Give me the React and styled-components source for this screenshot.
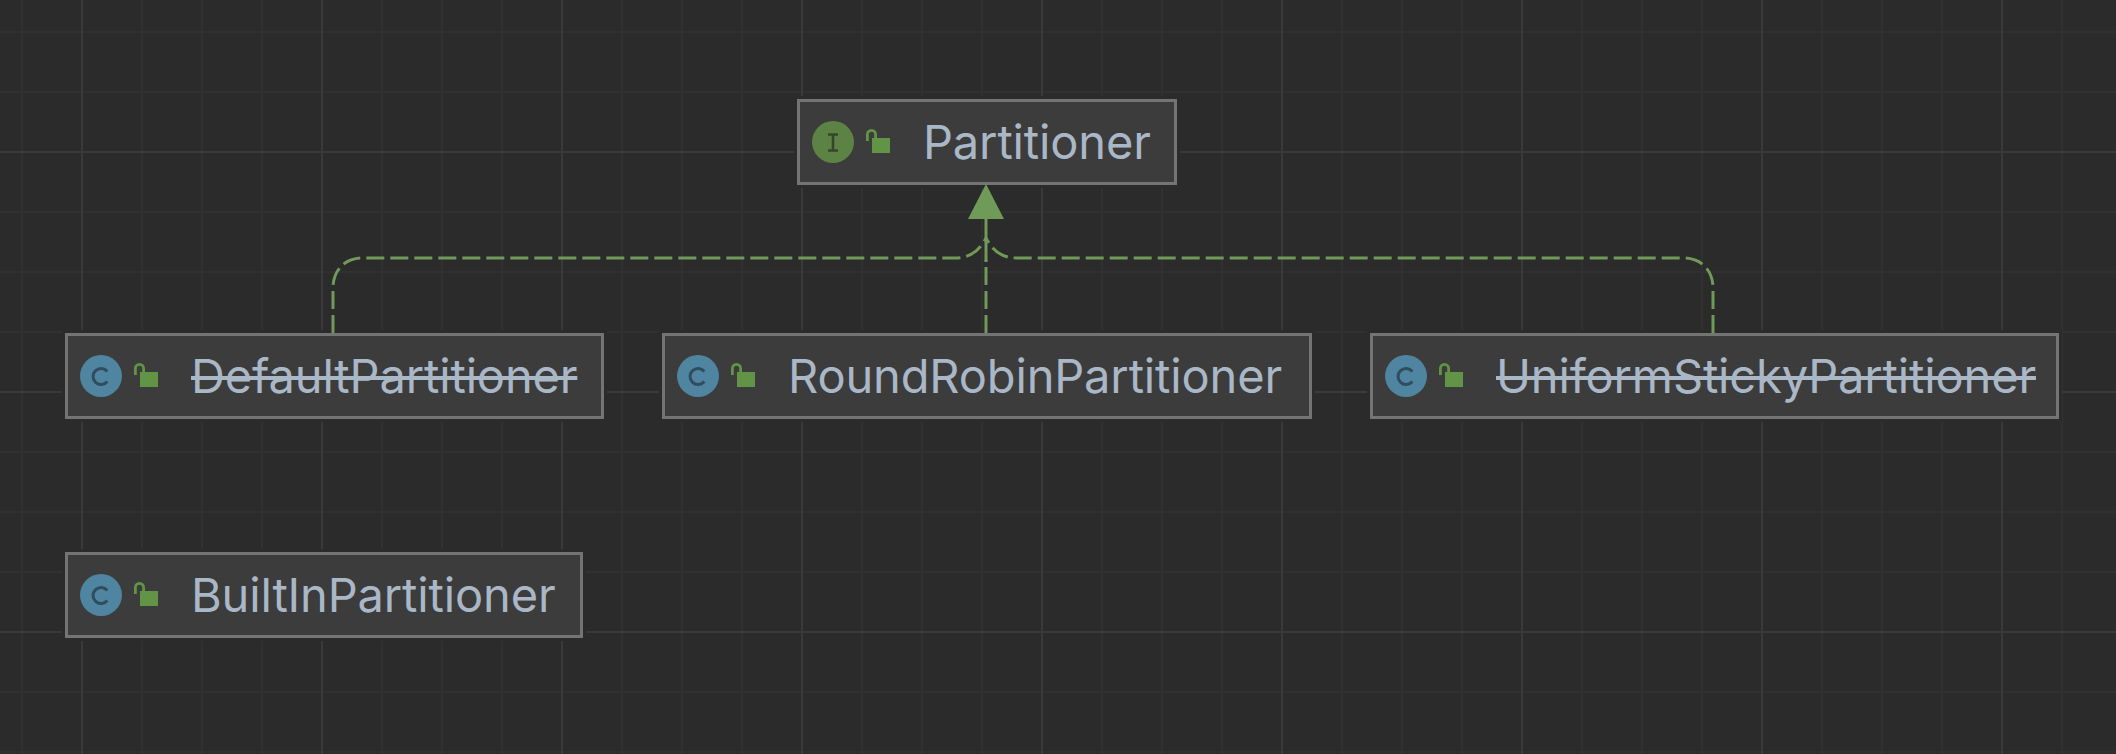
import React from "react";
import styled, { createGlobalStyle } from "styled-components";

const GlobalStyle = createGlobalStyle`
  html, body {
    margin: 0;
    padding: 0;
    background: #2b2b2b;
  }
`;

// grid of the diagram canvas: thin lines every 60px, brighter every 240px
const Canvas = styled.div`
  position: relative;
  width: 2116px;
  height: 754px;
  overflow: hidden;
  font-family: Inter, "Noto Sans", sans-serif;
  background-color: #2b2b2b;
  background-image:
    linear-gradient(to right, #3a3a3a 2px, transparent 2px),
    linear-gradient(to bottom, #3a3a3a 2px, transparent 2px),
    linear-gradient(to right, #313131 2px, transparent 2px),
    linear-gradient(to bottom, #313131 2px, transparent 2px);
  background-size: 240px 240px, 240px 240px, 60px 60px, 60px 60px;
  background-position: 81px 0, 0 151px, 21px 0, 0 31px;
`;

const Edges = styled.svg`
  position: absolute;
  left: 0;
  top: 0;
`;

const Node = styled.div`
  position: absolute;
  left: ${(p) => p.$x}px;
  top: ${(p) => p.$y}px;
  width: ${(p) => p.$w}px;
  height: 86px;
  box-sizing: border-box;
  display: flex;
  align-items: center;
  padding-left: 12px;
  background: #3c3c3c;
  border: 3px solid #747474;
  box-shadow: 0 0 0 3px #2b2b2b;
`;

const Badge = styled.div`
  width: 42px;
  height: 42px;
  border-radius: 50%;
  flex: none;
  background: ${(p) => (p.$kind === "I" ? "#5d8344" : "#4f85a0")};
  display: flex;
  align-items: center;
  justify-content: center;
`;

const LockIcon = styled.svg`
  flex: none;
  margin-left: 12px;
  overflow: visible;
`;

const Name = styled.span`
  margin-left: 33px;
  margin-top: -2px;
  font-size: 47px;
  letter-spacing: -0.15px;
  line-height: 1;
  white-space: nowrap;
  color: #a9b7c6;
  text-decoration: ${(p) => (p.$deprecated ? "line-through" : "none")};
  text-decoration-thickness: 4px;
`;

const InterfaceGlyph = () => (
  <svg width="42" height="42" viewBox="0 0 42 42">
    <path d="M16 13.5h10M16 29.5h10M21 13.5v16" fill="none" stroke="#36452c" strokeWidth="2.6" />
  </svg>
);

const ClassGlyph = () => (
  <svg width="42" height="42" viewBox="0 0 42 42">
    <path d="M27.3 16.5a8 8 0 1 0 0 10" fill="none" stroke="#2f4d5e" strokeWidth="3" />
  </svg>
);

const Lock = () => (
  <LockIcon width="24" height="24" viewBox="0 0 24 24">
    <path d="M1.4 11V4.5a4.1 4.1 0 0 1 8.2 0V9" fill="none" stroke="#629445" strokeWidth="2.8" />
    <rect x="6" y="8" width="18" height="15" fill="#629445" />
  </LockIcon>
);

const nodes = [
  { name: "Partitioner", kind: "I", x: 797, y: 99, w: 380 },
  { name: "DefaultPartitioner", kind: "C", x: 65, y: 333, w: 539, deprecated: true },
  { name: "RoundRobinPartitioner", kind: "C", x: 662, y: 333, w: 650 },
  { name: "UniformStickyPartitioner", kind: "C", x: 1370, y: 333, w: 689, deprecated: true },
  { name: "BuiltInPartitioner", kind: "C", x: 65, y: 552, w: 518 },
];

const green = "#6f9a57";

export default function App() {
  return (
    <Canvas>
      <GlobalStyle />
      {nodes.map((n) => (
        <Node key={n.name} $x={n.x} $y={n.y} $w={n.w}>
          <Badge $kind={n.kind}>{n.kind === "I" ? <InterfaceGlyph /> : <ClassGlyph />}</Badge>
          <Lock />
          <Name $deprecated={n.deprecated}>{n.name}</Name>
        </Node>
      ))}
      <Edges width="2116" height="754" viewBox="0 0 2116 754">
        <g fill="none" stroke={green} strokeWidth="3" strokeDasharray="18 6">
          <path d="M333 333V288C333 270 345 258 363 258H955C968 258 978 253 986 238" />
          <path d="M1713 333V288C1713 270 1701 258 1683 258H1017C1004 258 994 253 986 238" />
          <path d="M986 333V260" />
        </g>
        <path d="M986 262V215" fill="none" stroke={green} strokeWidth="3" />
        <polygon points="986,184 1004,219 968,219" fill={green} />
      </Edges>
    </Canvas>
  );
}
